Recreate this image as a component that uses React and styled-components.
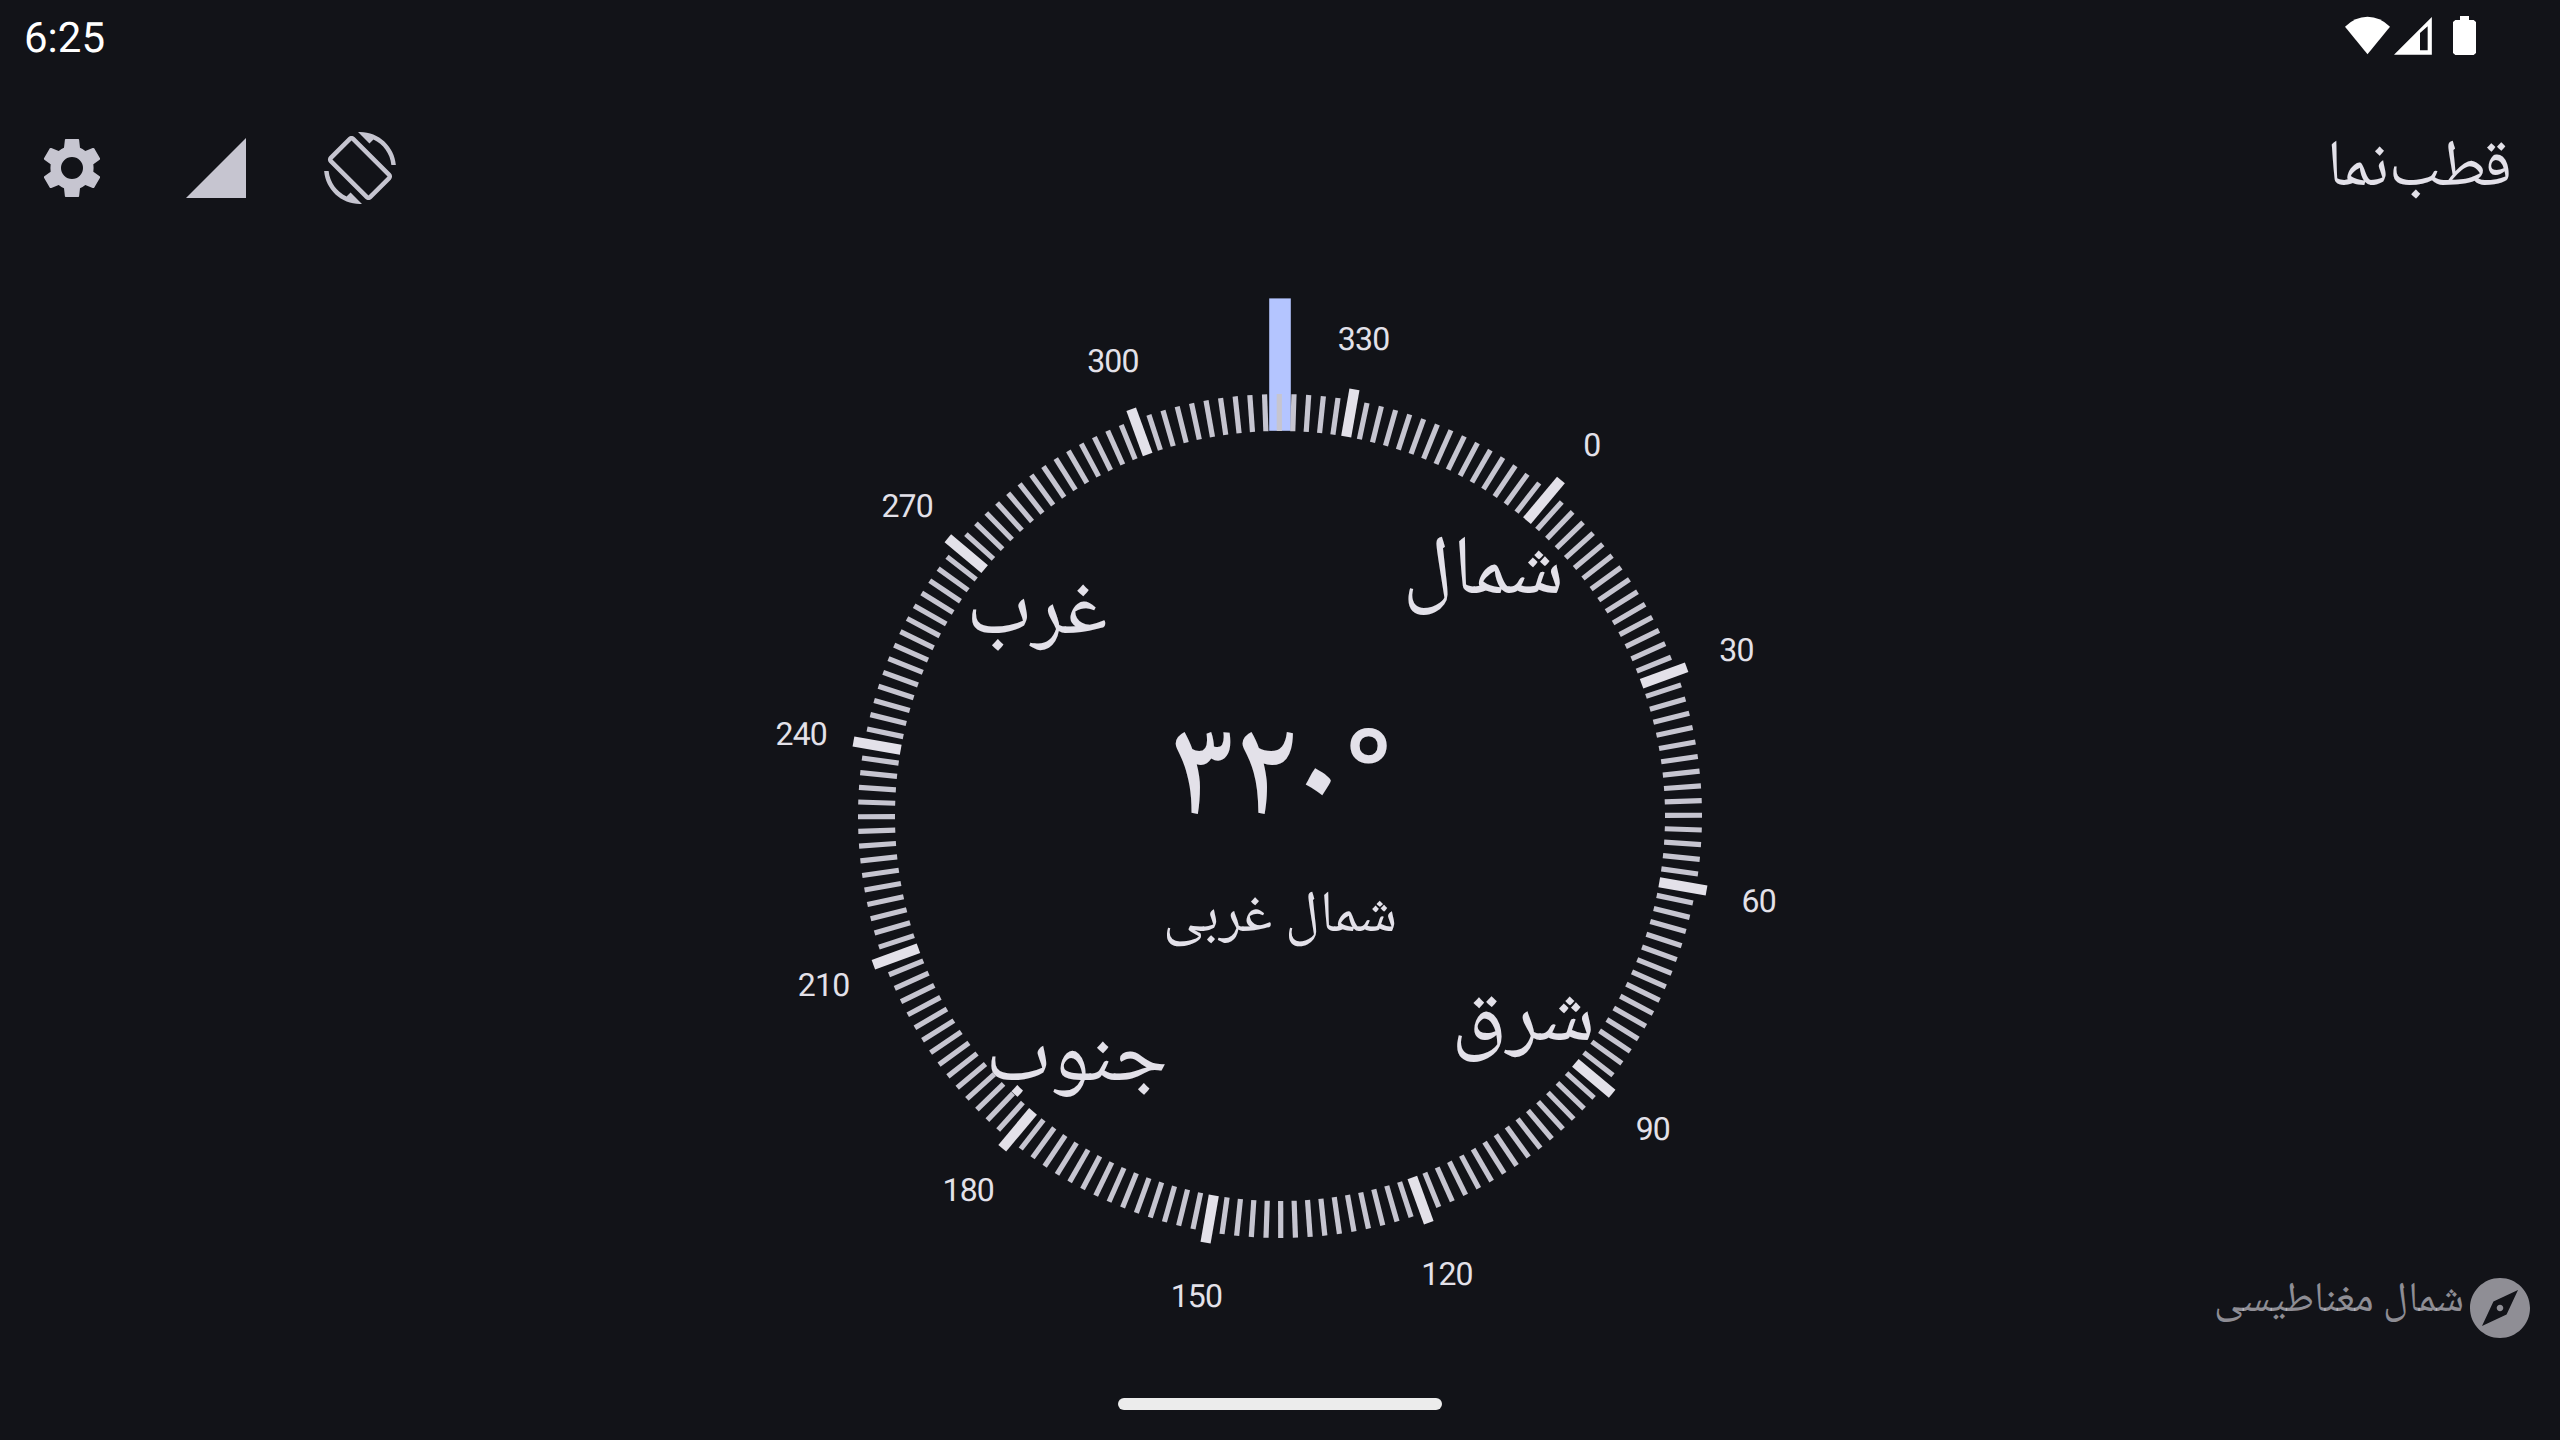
import React from "react";
import styled, { createGlobalStyle } from "styled-components";

const ARABIC = '"Noto Naskh Arabic", "Noto Sans Arabic", "DejaVu Sans", sans-serif';
const LATIN = 'Roboto, "Noto Sans", sans-serif';

const GlobalStyle = createGlobalStyle`
  body {
    margin: 0;
    background: #121318;
  }
`;

const Screen = styled.div`
  display: flex;
  flex-direction: column;
  width: 2560px;
  height: 1440px;
  overflow: hidden;
  background: #121318;
  color: #e3e1e9;
  font-family: ${LATIN};
  text-rendering: geometricPrecision;
`;

const StatusBar = styled.header`
  display: flex;
  justify-content: space-between;
  align-items: flex-start;
  box-sizing: border-box;
  height: 72px;
  padding: 16px 84px 0 24px;
  color: #fff;
`;

const Clock = styled.time`
  padding-top: 1px;
  font-size: 42px;
  line-height: 44px;
`;

const StatusIcons = styled.div`
  display: flex;
`;

const StatusIcon = styled.svg`
  display: block;
  height: 39px;
  width: ${(p) => p.$width}px;
  margin-left: ${(p) => p.$gap || 0}px;
  fill: #fff;
`;

const AppBar = styled.nav`
  display: flex;
  justify-content: space-between;
  align-items: center;
  height: 192px;
  padding-right: 48px;
`;

const Actions = styled.div`
  display: flex;
`;

const IconButton = styled.button`
  display: flex;
  align-items: center;
  justify-content: center;
  width: 144px;
  height: 144px;
  padding: 0;
  border: 0;
  background: none;
  color: #c6c5d0;
`;

const Icon = styled.svg`
  display: block;
  flex: none;
  width: 72px;
  height: 72px;
  fill: currentColor;
`;

const Title = styled.h1`
  margin: 0;
  padding-top: 6px;
  font-family: ${ARABIC};
  font-size: 66px;
  font-weight: 400;
  line-height: 120px;
  white-space: nowrap;
`;

const Main = styled.main`
  display: grid;
  grid-template-columns: 1fr 1100px 1fr;
  height: 1086px;
`;

const Dial = styled.svg`
  grid-column: 2;
  display: block;
  width: 1100px;
  height: 1086px;
`;

const Tick = styled.line`
  stroke: ${(p) => (p.$major ? "#e3e1e9" : "#c6c5d0")};
  stroke-width: ${(p) => (p.$major ? 10.2 : 5.2)};
`;

const Degree = styled.text`
  font-family: ${LATIN};
  font-size: 32px;
  letter-spacing: -0.8px;
  fill: #e3e1e9;
  text-anchor: middle;
`;

const Word = styled.text`
  font-family: ${ARABIC};
  font-size: ${(p) => p.$size}px;
  fill: #e3e1e9;
  text-anchor: middle;
`;

const Heading = styled.text`
  font-family: ${ARABIC};
  font-size: 142px;
  font-weight: 500;
  fill: #e3e1e9;
  direction: ltr;
  unicode-bidi: bidi-override;
`;

const DegreeSign = styled.tspan`
  font-size: 113px;
  font-weight: 700;
`;

const NorthType = styled.div`
  grid-column: 3;
  align-self: end;
  justify-self: end;
  display: flex;
  align-items: center;
  padding: 0 24px 6px 0;
  color: rgba(227, 225, 233, 0.6);
`;

const NorthLabel = styled.span`
  padding-bottom: 12px;
  font-family: ${ARABIC};
  font-size: 42.2px;
  line-height: 60px;
  white-space: nowrap;
`;

const NavBar = styled.footer`
  display: flex;
  justify-content: center;
  align-items: flex-start;
  height: 42px;
  padding-top: 48px;
`;

const HomeHandle = styled.div`
  width: 324px;
  height: 12px;
  border-radius: 6px;
  background: #ececec;
`;

const CX = 550;
const CY = 552;
const HEADING = 320.1;

const polar = (deg, r) => {
  const a = ((deg - HEADING) * Math.PI) / 180;
  return [CX + r * Math.sin(a), CY - r * Math.cos(a)];
};

const tickEnd = (deg) => {
  if (deg === 0) return 438;
  return deg % 30 === 0 ? 433 : 422;
};

const ticks = Array.from({ length: 180 }, (_, i) => i * 2);
const labels = Array.from({ length: 12 }, (_, i) => i * 30);
const cardinals = [
  ["شمال", 0],
  ["شرق", 90],
  ["جنوب", 180],
  ["غرب", 270],
];

function CompassDial() {
  return (
    <Dial viewBox="0 0 1100 1086">
      <rect x="539.2" y="34.4" width="21.6" height="132.4" fill="#b4c5ff" />
      {ticks.map((deg) => {
        const [x1, y1] = polar(deg, 385);
        const [x2, y2] = polar(deg, tickEnd(deg));
        return <Tick key={deg} $major={deg % 30 === 0} x1={x1} y1={y1} x2={x2} y2={y2} />;
      })}
      {labels.map((deg) => {
        const [x, y] = polar(deg, 486);
        return (
          <Degree key={deg} x={x} y={y + 12.5}>
            {deg}
          </Degree>
        );
      })}
      {cardinals.map(([name, deg]) => {
        const [x, y] = polar(deg, 317);
        return (
          <Word key={deg} $size={84} x={x} y={y + 20.5}>
            {name}
          </Word>
        );
      })}
      <Heading y="550">
        <tspan x="440">۳</tspan>
        <tspan x="504">۲</tspan>
        <tspan x="554">۰</tspan>
        <DegreeSign x="616" y="546">°</DegreeSign>
      </Heading>
      <Word $size={58.4} x={CX} y="667">
        شمال غربی
      </Word>
    </Dial>
  );
}

export default function App() {
  return (
    <Screen>
      <GlobalStyle />
      <StatusBar>
        <Clock>6:25</Clock>
        <StatusIcons>
          <StatusIcon $width={45} viewBox="30 33 135 117">
            <path d="M30 65Q60 35 97.500 35T165 65L97.500 147.500Z" />
          </StatusIcon>
          <StatusIcon $width={38} $gap={4} viewBox="177 33 114 117">
            <path fillRule="evenodd" d="M177 149.500H290.500V36ZM255 84V136H278V64Z" />
          </StatusIcon>
          <StatusIcon $width={23} $gap={21} viewBox="354 33 69 117">
            <path d="M375 33H402V45H416L423 51V144L416 150H361L354 144V51L361 45H375Z" />
          </StatusIcon>
        </StatusIcons>
      </StatusBar>

      <AppBar>
        <Actions>
          <IconButton aria-label="settings">
            <Icon viewBox="18 36 216 216">
              <path
                fillRule="evenodd"
                d="M107 57H145Q147 57 147.300 59L150 83Q157 86 166 93L188 84Q191 83 192.500 85L210 115Q211 118 209 119L190 133Q191.500 144 190 155L209 169Q211 170 210 173L192.500 203Q191 205 188 204L166 195Q157 202 150 205L147.300 229Q147 231 145 231H107Q105 231 104.700 229L102 205Q95 202 86 195L64 204Q61 205 59.500 203L42 173Q41 170 43 169L62 155Q60.500 144 62 133L43 119Q41 118 42 115L59.500 85Q61 83 64 84L86 93Q95 86 102 83L104.700 59Q105 57 107 57ZM126 111A33 33 0 1 0 126 177A33 33 0 1 0 126 111Z"
              />
            </Icon>
          </IconButton>
          <IconButton aria-label="accuracy">
            <Icon viewBox="0 0 24 24">
              <path d="M2 22h20V2z" />
            </Icon>
          </IconButton>
          <IconButton aria-label="rotation">
            <Icon viewBox="0 0 24 24">
              <path d="M16.48 2.52c3.27 1.55 5.61 4.72 5.97 8.48h1.500C23.440 4.840 18.290 0 12 0l-.66.03 3.810 3.810 1.330-1.320zm-6.250-.77c-.59-.59-1.540-.59-2.120 0L1.750 8.110c-.59.59-.59 1.540 0 2.120l12.020 12.020c.59.59 1.540.59 2.120 0l6.360-6.360c.59-.59.59-1.540 0-2.120L10.230 1.750zm4.600 19.440L2.810 9.170l6.360-6.360 12.020 12.020-6.360 6.360zm-7.310.29C4.250 19.940 1.910 16.760 1.550 13H.05C.56 19.160 5.710 24 12 24l.66-.03-3.810-3.810-1.330 1.320z" />
            </Icon>
          </IconButton>
        </Actions>
        <Title>قطب‌نما</Title>
      </AppBar>

      <Main>
        <CompassDial />
        <NorthType>
          <NorthLabel>شمال مغناطیسی</NorthLabel>
          <Icon viewBox="0 0 24 24">
            <path d="M12 10.900c-.61 0-1.100.49-1.100 1.100s.49 1.100 1.100 1.100c.61 0 1.100-.49 1.100-1.100s-.49-1.100-1.100-1.100zM12 2C6.480 2 2 6.480 2 12s4.480 10 10 10 10-4.480 10-10S17.520 2 12 2zm2.190 12.190L6 18l3.810-8.190L18 6l-3.810 8.190z" />
          </Icon>
        </NorthType>
      </Main>

      <NavBar>
        <HomeHandle />
      </NavBar>
    </Screen>
  );
}
